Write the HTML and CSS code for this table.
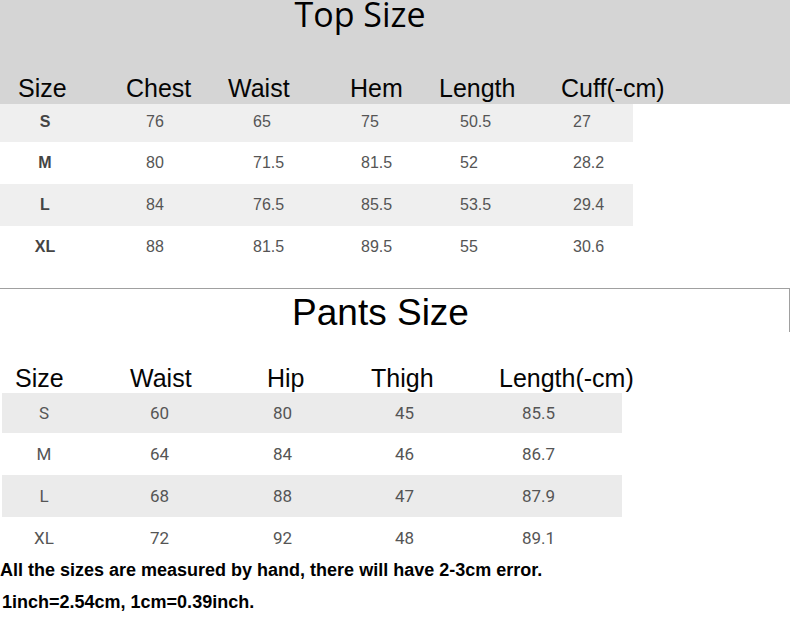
FILE: index.html
```html
<!DOCTYPE html>
<html>
<head>
<meta charset="utf-8">
<link rel="stylesheet" href="styles.css">
</head>
<body>
<div class="page">
  <section class="top-head">
    <h1 class="top-title">Top Size</h1>
    <div class="top-labels">
      <span class="tl-size">Size</span>
      <span class="tl-chest">Chest</span>
      <span class="tl-waist">Waist</span>
      <span class="tl-hem">Hem</span>
      <span class="tl-length">Length</span>
      <span class="tl-cuff">Cuff(-cm)</span>
    </div>
  </section>
  <div class="top-table">
    <div class="top-row shade first"><span class="sz">S</span><span>76</span><span>65</span><span>75</span><span>50.5</span><span>27</span></div>
    <div class="top-row"><span class="sz">M</span><span>80</span><span>71.5</span><span>81.5</span><span>52</span><span>28.2</span></div>
    <div class="top-row shade"><span class="sz">L</span><span>84</span><span>76.5</span><span>85.5</span><span>53.5</span><span>29.4</span></div>
    <div class="top-row"><span class="sz">XL</span><span>88</span><span>81.5</span><span>89.5</span><span>55</span><span>30.6</span></div>
  </div>
  <h2 class="pants-title">Pants Size</h2>
  <div class="pants-labels">
    <span class="pl-size">Size</span>
    <span class="pl-waist">Waist</span>
    <span class="pl-hip">Hip</span>
    <span class="pl-thigh">Thigh</span>
    <span class="pl-length">Length(-cm)</span>
  </div>
  <div class="pants-table">
    <div class="p-row shade first"><span class="psz">S</span><span>60</span><span>80</span><span>45</span><span>85.5</span></div>
    <div class="p-row"><span class="psz">M</span><span>64</span><span>84</span><span>46</span><span>86.7</span></div>
    <div class="p-row shade"><span class="psz">L</span><span>68</span><span>88</span><span>47</span><span>87.9</span></div>
    <div class="p-row"><span class="psz">XL</span><span>72</span><span>92</span><span>48</span><span>89.1</span></div>
  </div>
  <p class="note">All the sizes are measured by hand, there will have 2-3cm error.</p>
  <p class="note second">1inch=2.54cm, 1cm=0.39inch.</p>
</div>
</body>
</html>
```

FILE: styles.css
```css
html, body {
  margin: 0;
  padding: 0;
  background: #ffffff;
}
.page {
  width: 790px;
  height: 627px;
  overflow: hidden;
  font-family: "Liberation Sans", Arial, sans-serif;
  color: #000;
}
.top-head {
  background: #d5d5d5;
  height: 104px;
  display: flex;
  flex-direction: column;
}
.top-title {
  margin: 0;
  font-family: "Open Sans", sans-serif;
  font-weight: 400;
  font-size: 34px;
  line-height: 28px;
  height: 28px;
  width: 720px;
  text-align: center;
  color: #000;
}
.top-labels {
  margin-top: 45px;
  display: flex;
  padding-left: 18px;
  font-size: 25px;
  line-height: 30px;
  height: 31px;
  color: #050505;
}
.tl-size { width: 108px; }
.tl-chest { width: 102px; }
.tl-waist { width: 122px; }
.tl-hem { width: 89px; }
.tl-length { width: 122px; }

.top-table {
  width: 633px;
}
.top-row {
  display: grid;
  grid-template-columns: 146px 107px 108px 99px 113px 60px;
  height: 42px;
  line-height: 42px;
  font-size: 16px;
  color: #555;
}
.top-row.first {
  height: 38px;
  line-height: 35px;
}
.shade { background: #efefef; }
.top-row .sz {
  font-weight: 700;
  color: #444;
  text-align: center;
  padding-right: 56px;
}

.pants-title {
  margin: 20px 0 0 0;
  box-sizing: border-box;
  width: 790px;
  height: 44px;
  border-top: 1px solid #a0a0a0;
  border-right: 1px solid #a0a0a0;
  padding: 5px 28px 0 0;
  font-weight: 400;
  font-size: 37px;
  line-height: 38px;
  text-align: center;
  color: #000;
}
.pants-labels {
  margin-top: 31px;
  display: flex;
  padding-left: 15px;
  font-size: 25px;
  line-height: 30px;
  height: 30px;
  color: #050505;
}
.pl-size { width: 115px; }
.pl-waist { width: 137px; }
.pl-hip { width: 104px; }
.pl-thigh { width: 128px; }

.pants-table {
  width: 620px;
  margin-left: 2px;
}
.p-row {
  display: grid;
  grid-template-columns: 148px 123px 122px 127px 100px;
  height: 42px;
  line-height: 42px;
  font-family: Roboto, "Liberation Sans", sans-serif;
  font-size: 17px;
  color: #555;
}
.p-row.first {
  height: 40px;
  line-height: 40px;
}
.p-row.shade { background: #ebebeb; }
.p-row .psz {
  text-align: center;
  padding-right: 64px;
}
.note {
  margin: 0;
  font-weight: 700;
  font-size: 18px;
  line-height: 22px;
  color: #000;
}
.note.second {
  margin-top: 10px;
  padding-left: 2px;
}
```
